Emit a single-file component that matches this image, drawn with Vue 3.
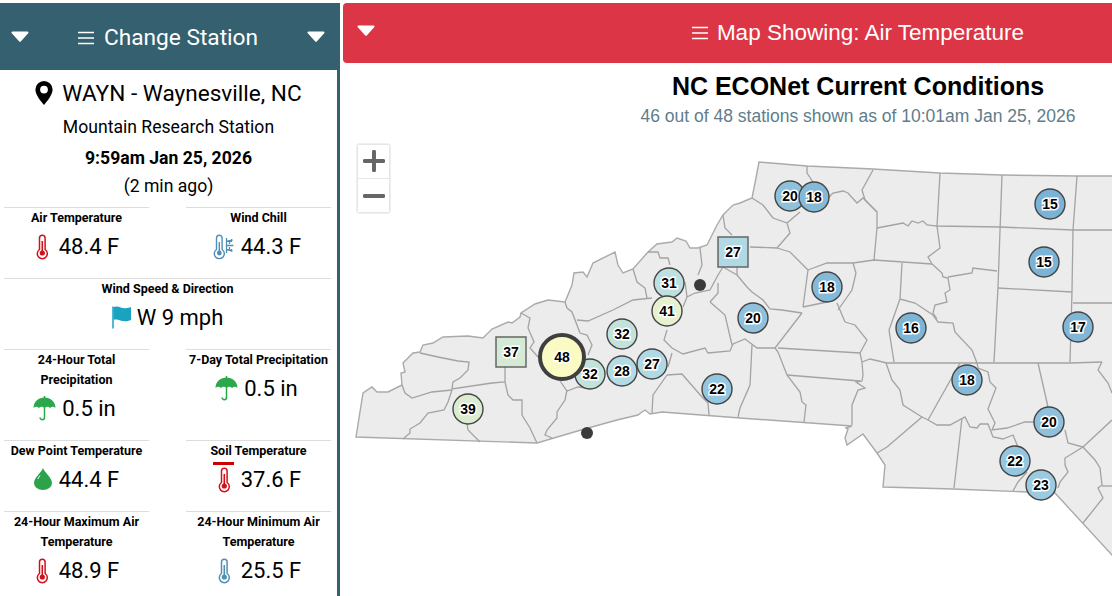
<template>
  <div class="page">
    <aside class="side">
      <header class="side-head">
        <svg class="caret" viewBox="0 0 18 11"><path d="M1.500 1.500h15L9 9.800z" /></svg>
        <span class="head-title">
          <svg class="burger" viewBox="0 0 16 14"><path d="M0 1.500h16M0 7h16M0 12.500h16" /></svg>
          Change Station
        </span>
        <svg class="caret" viewBox="0 0 18 11"><path d="M1.500 1.500h15L9 9.800z" /></svg>
      </header>

      <div class="station">
        <div class="station-name">
          <svg class="pin" viewBox="0 0 18 24">
            <path fill-rule="evenodd" d="M9 0a8.600 8.600 0 0 0-8.600 8.600C.4 14 6 20.500 9 24c3-3.500 8.600-10 8.600-15.400A8.600 8.600 0 0 0 9 0zm0 4.700a3.900 3.900 0 1 1 0 7.800 3.900 3.900 0 0 1 0-7.800z" />
          </svg>
          WAYN - Waynesville, NC
        </div>
        <div class="station-site">Mountain Research Station</div>
        <div class="station-time">9:59am Jan 25, 2026</div>
        <div class="station-ago">(2 min ago)</div>
      </div>

      <div class="readings">
        <div v-for="r in readings" :key="r.label" class="reading" :class="{ wide: r.wide }">
          <div class="reading-label" v-html="r.label"></div>
          <div class="reading-value">
            <span class="icon-box">
              <span v-if="r.bar" class="soil-bar"></span>
              <svg v-if="r.icon === 'thermo'" viewBox="0 0 25 26">
                <path d="M5.500 5a2.800 2.800 0 0 1 5.600 0v11.500a5 5 0 1 1-5.600 0z" fill="#fff" :stroke="r.color" stroke-width="1.500" />
                <path d="M8.300 8v10" :stroke="r.color" stroke-width="1.600" />
                <circle cx="8.300" cy="20" r="2.600" :fill="r.color" />
              </svg>
              <svg v-else-if="r.icon === 'chill'" viewBox="0 0 25 26">
                <path d="M0.500 5a2.800 2.800 0 0 1 5.600 0v11.500a5 5 0 1 1-5.600 0z" fill="#fff" stroke="#4f8fb5" stroke-width="1.400" />
                <path d="M3.300 9v9" stroke="#4f8fb5" stroke-width="1.400" />
                <circle cx="3.300" cy="20" r="2.400" fill="#4f8fb5" />
                <path d="M10.500 5v15M10.500 8.500l6-1.500M10.500 12.500h7M10.500 16.500l6 1.500M13.500 7v4M13.500 14v4M15.500 6v3M15.500 16v3" stroke="#4f8fb5" stroke-width="1.300" fill="none" />
              </svg>
              <svg v-else-if="r.icon === 'flag'" viewBox="0 0 25 26">
                <path d="M1 2.500v22" stroke="#19a3c0" stroke-width="1.500" />
                <path d="M1.500 3c5-2 7.500 1.500 12 1.200 2-.1 4-.7 5.500-1.200v13c-5 2-9.500 1.200-13-.2-1.800-.5-3.200-.5-4.500 0z" fill="#19a3c0" />
              </svg>
              <svg v-else-if="r.icon === 'umbrella'" viewBox="0 0 25 26">
                <path d="M-3.500 13C-3.500 6.500 2 2.500 7.500 2.500S18.500 6.500 18.500 13c-1.500-1.800-3.800-1.800-5.500 0-1.300-1.500-3.800-1.800-5.500 0-1.700-1.800-4.200-1.500-5.500 0-1.700-1.800-4-1.800-5.500 0z" fill="#2aa84a" />
                <path d="M7.500 1v2M7.500 12v10.500a2.200 2.200 0 0 1-4.400 0" fill="none" stroke="#2aa84a" stroke-width="1.500" />
              </svg>
              <svg v-else-if="r.icon === 'drop'" viewBox="0 0 25 26">
                <path d="M9 2c1.500 4.500 9 9.500 9 15a9 7 0 0 1-18 0C0 11.500 7.500 6.500 9 2z" fill="#2ca24b" />
                <path d="M6 9.500c-1 1.300-1.800 2.400-2.200 3.500" stroke="#fff" stroke-width="1" fill="none" />
              </svg>
            </span>
            <span>{{ r.value }}</span>
          </div>
        </div>
      </div>
    </aside>

    <main class="main">
      <header class="main-head">
        <svg class="caret" viewBox="0 0 18 11"><path d="M1.500 1.500h15L9 9.800z" /></svg>
        <span class="main-title">
          <svg class="burger" viewBox="0 0 16 14"><path d="M0 1.500h16M0 7h16M0 12.500h16" /></svg>
          Map Showing: Air Temperature
        </span>
      </header>

      <div class="map">
        <h1 class="map-title">NC ECONet Current Conditions</h1>
        <p class="map-sub">46 out of 48 stations shown as of 10:01am Jan 25, 2026</p>

        <div class="zoom-ctl">
          <button class="zoom-btn">
            <svg viewBox="0 0 20 20"><path d="M10 1.500v17M1.500 10h17" /></svg>
          </button>
          <button class="zoom-btn">
            <svg viewBox="0 0 20 20"><path d="M1.500 10h17" /></svg>
          </button>
        </div>

        <svg class="map-svg" viewBox="343 63 1030 533">
          <polygon class="state" :points="outline" />
          <polyline v-for="(c, i) in counties" :key="i" class="county" :points="c" />

          <circle cx="700" cy="285" r="6" class="dot" />
          <circle cx="587" cy="433" r="6" class="dot" />

          <g v-for="m in markers" :key="m.x + '-' + m.y">
            <rect v-if="m.square" class="mark-sq" :x="m.x - 15" :y="m.y - 15" width="30" height="30" :fill="m.c" />
            <circle v-else :class="m.big ? 'mark-big' : 'mark'" :cx="m.x" :cy="m.y" :r="m.big ? 22 : 15" :fill="m.c" />
            <text class="mark-text" :x="m.x" :y="m.y + 5">{{ m.t }}</text>
          </g>
        </svg>
      </div>
    </main>
  </div>
</template>

<script setup>
const RED = '#d0111b';

const readings = [
  { label: 'Air Temperature', icon: 'thermo', color: RED, value: '48.4 F' },
  { label: 'Wind Chill', icon: 'chill', value: '44.3 F' },
  { label: 'Wind Speed &amp; Direction', icon: 'flag', value: 'W 9 mph', wide: true },
  { label: '24-Hour Total Precipitation', icon: 'umbrella', value: '0.5 in' },
  { label: '7-Day Total Precipitation', icon: 'umbrella', value: '0.5 in' },
  { label: 'Dew Point Temperature', icon: 'drop', value: '44.4 F' },
  { label: 'Soil Temperature', icon: 'thermo', color: RED, value: '37.6 F', bar: true },
  { label: '24-Hour Maximum Air Temperature', icon: 'thermo', color: RED, value: '48.9 F' },
  { label: '24-Hour Minimum Air Temperature', icon: 'thermo', color: '#4f8fb5', value: '25.5 F' },
];

const outline = `356,437 363,393 372,387 377,392 388,392 402,385 401,373 405,372 403,363 413,353 420,352
423,345 433,343 443,337 468,336 483,338 492,329 508,322 512,323 520,317 521,313 535,304 548,300 565,302
572,285 574,273 583,272 587,277 593,263 615,252 618,265 623,273 633,269 648,252 657,244 672,242 677,238
686,241 690,248 698,248 707,245 717,225 723,215 733,205 740,203 752,198 755,183 759,162 807,166 873,169
940,173 1002,175 1077,176 1400,176 1400,840 1112,555 1055,493 1027,492 953,489 883,487 885,465 877,453
863,434 847,445 845,438 848,429 846,428 852,426 740,418 662,412 650,414 645,410 642,412 638,415 617,420
581,430 537,443`;

const counties = [
  // far west
  '420,353 438,357 458,361 469,362 468,370 460,378 453,382 452,389 492,383 505,382 505,366',
  '521,313 530,318 528,328 534,342 530,348 538,357',
  '505,382 508,395 513,400 522,400 522,415 530,428 537,443',
  '452,390 448,402 444,410 428,413 420,423 410,429 410,433 403,439',
  '402,385 405,393 412,398 432,392 452,390',
  '467,423 468,430 480,442',
  '567,390 565,400 557,412 557,418 547,430 545,435 552,438',
  '558,378 567,391 578,387 588,388',
  '565,302 567,308 572,312 580,333 587,335 592,345 588,355',
  '577,320 588,321 613,310 633,300 652,298',
  '633,269 637,282 645,288 647,298',
  '648,252 658,252 660,258 668,258 670,265',
  '700,248 702,265 698,275',
  '683,307 687,297 695,293 710,290 718,275 723,267 737,275 747,287 752,292 763,300 770,309 782,310 802,313',
  '710,302 725,315 732,345',
  '710,302 718,293 718,283',
  '687,297 685,282',
  '667,330 664,340 672,348 683,354 705,348 708,353 730,351 733,344 745,339 757,348 775,348 802,313',
  '672,353 668,367',
  '667,375 682,374 702,397 708,403 709,415',
  '667,375 653,395 652,413',
  '752,345 750,385 740,408 738,417',
  '775,348 778,352 787,375 800,392 802,402 806,405 804,422',
  '778,348 860,353',
  '787,375 860,381',
  '845,322 855,325 867,340 860,353 862,362 863,375 862,381 856,382 865,388 858,390 852,405 852,425',
  '862,362 870,359 887,363 960,363 993,363 1070,363 1102,362',
  // piedmont
  '752,198 763,205 773,218 787,223 790,233 777,248 750,247',
  '777,248 790,252 808,270 803,307',
  '808,270 827,263 853,263 856,273 852,290 838,310',
  '853,263 874,260 932,264',
  '827,302 803,307',
  '837,303 845,322',
  '807,166 807,173 813,182',
  '828,198 833,193 843,191 848,193 857,203 863,198 877,212',
  '800,212 787,223',
  '723,215 725,228 732,235',
  '737,267 737,275',
  '877,228 877,212 865,200 862,190 873,170',
  '877,228 874,260',
  '877,228 903,223 908,226 912,221 918,223 923,221 927,225 937,226 940,248 928,257 932,264',
  '940,173 937,226 1000,227 1073,230 1112,230',
  '1002,175 998,287 994,362',
  '1077,176 1073,230 1072,292 1070,362',
  '998,288 1072,292',
  '1073,303 1112,303',
  '932,264 942,273 943,277 948,278 950,290 945,293 947,302 935,305 933,313 937,319',
  '948,277 972,273 973,268 997,271',
  '902,263 900,299 889,330 894,362',
  '900,299 915,303 933,315 938,322 953,323 955,332 972,350 977,363',
  // east
  '886,363 892,380 900,390 903,405 922,417 887,447 877,453',
  '922,417 928,420 937,425 950,425 965,417 970,427 977,428 980,424 988,424 993,437 1003,439 1013,435 1018,447',
  '928,420 960,363',
  '962,418 954,488',
  '977,363 978,368 988,372 990,382 996,388 988,409 995,423 992,430 1007,428 1025,422 1035,422',
  '1038,363 1048,407',
  '1065,430 1068,443 1083,447 1065,458 1065,465 1068,472 1060,482 1058,488',
  '1083,447 1095,460 1100,468 1102,485 1098,488 1103,498 1083,523',
  '1083,447 1112,420',
  '1102,486 1112,486',
  '1013,491 1018,482 1027,472',
  '1102,362 1098,370 1108,383 1112,393',
];

const markers = [
  { x: 790, y: 196, t: 20, c: '#8fc0dc' },
  { x: 814, y: 197, t: 18, c: '#85b9d8' },
  { x: 1050, y: 204, t: 15, c: '#79b3d6' },
  { x: 1044, y: 262, t: 15, c: '#79b3d6' },
  { x: 733, y: 252, t: 27, c: '#b0d9e4', square: true },
  { x: 669, y: 283, t: 31, c: '#bfe0e0' },
  { x: 667, y: 311, t: 41, c: '#e6f1cf' },
  { x: 827, y: 287, t: 18, c: '#85b9d8' },
  { x: 753, y: 318, t: 20, c: '#8fc0dc' },
  { x: 911, y: 328, t: 16, c: '#7cb5d6' },
  { x: 1078, y: 327, t: 17, c: '#80b7d7' },
  { x: 622, y: 334, t: 32, c: '#c2e2dc' },
  { x: 511, y: 352, t: 37, c: '#d5ead5', square: true },
  { x: 590, y: 374, t: 32, c: '#c2e2dc' },
  { x: 562, y: 357, t: 48, c: '#f9fbc3', big: true },
  { x: 622, y: 371, t: 28, c: '#b3dbe5' },
  { x: 652, y: 364, t: 27, c: '#b0d9e4' },
  { x: 717, y: 389, t: 22, c: '#94c6df' },
  { x: 967, y: 380, t: 18, c: '#85b9d8' },
  { x: 468, y: 409, t: 39, c: '#dcecd0' },
  { x: 1049, y: 422, t: 20, c: '#8fc0dc' },
  { x: 1015, y: 461, t: 22, c: '#94c6df' },
  { x: 1041, y: 485, t: 23, c: '#9ccbe1' },
];
</script>

<style>
html, body {
  margin: 0;
  background: #fff;
}
</style>

<style scoped>
.page {
  display: flex;
  width: 1112px;
  height: 596px;
  padding-top: 3px;
  box-sizing: border-box;
  overflow: hidden;
  font-family: Roboto, sans-serif;
  color: #000;
}

.side {
  flex: none;
  width: 340px;
  box-sizing: border-box;
  border-right: 3px solid #34606f;
}
.side-head {
  display: flex;
  align-items: center;
  justify-content: space-between;
  height: 67px;
  padding: 0 12px 0 11px;
  background: #34606f;
  color: #fff;
  font-size: 22.700px;
}
.head-title {
  display: flex;
  align-items: center;
  gap: 10px;
  padding-top: 2px;
}
.caret {
  flex: none;
  width: 18px;
  height: 11px;
  fill: #fff;
  stroke: #fff;
  stroke-width: 2;
  stroke-linejoin: round;
}
.burger {
  width: 16px;
  height: 14px;
  stroke: #fff;
  stroke-width: 1.300;
  fill: none;
}

.station {
  text-align: center;
  font-size: 17.600px;
  padding-top: 5px;
  height: 137px;
  box-sizing: border-box;
}
.station-name {
  display: flex;
  justify-content: center;
  align-items: center;
  gap: 9px;
  font-size: 22.600px;
  height: 36px;
}
.pin {
  width: 18px;
  height: 24px;
  fill: #000;
}
.station-site {
  height: 32px;
  line-height: 32px;
}
.station-time {
  height: 30px;
  line-height: 30px;
  font-weight: 700;
}
.station-ago {
  height: 26px;
  line-height: 26px;
}

.readings {
  display: grid;
  grid-template-columns: 145px 145px;
  column-gap: 37px;
  padding-left: 4px;
}
.reading {
  border-top: 1px solid #ddd;
  text-align: center;
  padding-bottom: 14px;
}
.reading.wide {
  grid-column: 1 / 3;
}
.reading-label {
  font-size: 12.500px;
  font-weight: 700;
  line-height: 20px;
}
.reading-value {
  display: flex;
  justify-content: center;
  align-items: center;
  height: 36px;
  font-size: 22px;
}
.icon-box {
  position: relative;
  flex: none;
  width: 25px;
  height: 26px;
}
.icon-box svg {
  display: block;
  width: 25px;
  height: 26px;
  overflow: visible;
}
.soil-bar {
  position: absolute;
  left: -3px;
  top: -4px;
  width: 21px;
  height: 3px;
  background: #c00;
}

.main {
  flex: none;
  width: 1030px;
  margin-left: 3px;
}
.main-head {
  position: relative;
  display: flex;
  align-items: center;
  justify-content: center;
  height: 60px;
  background: #dc3545;
  border-radius: 4px 0 0 4px;
  color: #fff;
  font-family: "Liberation Sans", sans-serif;
  font-size: 22.500px;
}
.main-head .caret {
  position: absolute;
  left: 14px;
  top: 22px;
}
.main-title {
  display: flex;
  align-items: center;
  gap: 9px;
}

.map {
  position: relative;
  height: 533px;
  font-family: "Liberation Sans", sans-serif;
  text-align: center;
}
.map-title {
  position: relative;
  margin: 0;
  padding-top: 9px;
  font-size: 25px;
  line-height: 28px;
  font-weight: 700;
  z-index: 1;
}
.map-sub {
  position: relative;
  margin: 5px 0 0;
  font-size: 17.500px;
  line-height: 22px;
  color: #607d8b;
  z-index: 1;
}
.zoom-ctl {
  position: absolute;
  left: 14px;
  top: 81px;
  width: 31px;
  border: 1px solid #e6e6e6;
  border-radius: 3px;
  box-shadow: 0 0 0 1px #efefef;
  background: #fff;
  z-index: 2;
}
.zoom-btn {
  display: flex;
  align-items: center;
  justify-content: center;
  width: 100%;
  height: 33px;
  padding: 0;
  border: 0;
  background: #fff;
}
.zoom-btn + .zoom-btn {
  height: 34px;
  border-top: 1px solid #e6e6e6;
}
.zoom-btn svg {
  width: 22px;
  height: 22px;
  stroke: #666;
  stroke-width: 3.600;
  stroke-linecap: round;
  fill: none;
}
.zoom-btn:first-child svg {
  margin-bottom: 2px;
}

.map-svg {
  position: absolute;
  left: 0;
  top: 0;
  width: 1030px;
  height: 533px;
}
.state {
  fill: #ececec;
  stroke: #aaa;
  stroke-width: 1.400;
}
.county {
  fill: none;
  stroke: #a3a3a3;
  stroke-width: 1.300;
}
.dot {
  fill: #3b3b3b;
}
.mark {
  stroke: #444;
  stroke-width: 1.400;
}
.mark-big {
  stroke: #3f3f3f;
  stroke-width: 4;
}
.mark-sq {
  stroke: #666;
  stroke-width: 1.500;
}
.mark-text {
  font-family: "Liberation Sans", sans-serif;
  font-size: 14px;
  font-weight: 700;
  text-anchor: middle;
  fill: #000;
  stroke: #fff;
  stroke-width: 3px;
  paint-order: stroke;
}
</style>
